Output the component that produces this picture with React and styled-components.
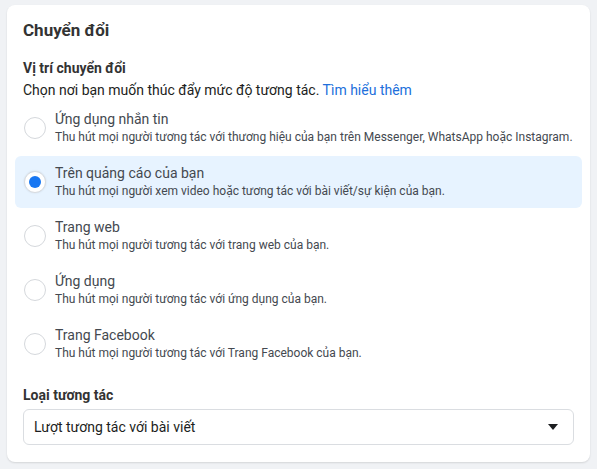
import React, { useState } from 'react'
import styled, { createGlobalStyle } from 'styled-components'

const GlobalStyle = createGlobalStyle`
  html, body {
    margin: 0;
    padding: 0;
    background: #f0f2f5;
    font-family: Roboto, "Liberation Sans", Arial, sans-serif;
  }
`

const Page = styled.div`
  padding: 5px 7px 7px 7px;
`

const Card = styled.div`
  background: #fff;
  border-radius: 8px;
  box-shadow: 0 1px 2px rgba(0, 0, 0, 0.12);
  padding: 14px 16px 17px 16px;
  color: #1c1e21;
`

const Title = styled.div`
  font-size: 17px;
  font-weight: 700;
  color: #333;
  line-height: 22px;
  margin-bottom: 17px;
`

const Label = styled.div`
  font-size: 14px;
  font-weight: 700;
  color: #333;
  line-height: 20px;
`

const Desc = styled.div`
  font-size: 14px;
  line-height: 20px;
  color: #1c1e21;
  margin: 2px 0 2px 0;
`

const Link = styled.a`
  color: #216fdb;
  text-decoration: none;
  cursor: pointer;
`

const List = styled.div`
  display: flex;
  flex-direction: column;
  gap: 2px;
  margin: 0 -8px 0 -8px;
`

const Row = styled.label`
  display: flex;
  align-items: center;
  gap: 9px;
  padding: 8px 8px 8px 9px;
  border-radius: 6px;
  background: ${({ $active }) => ($active ? '#e7f3ff' : 'transparent')};
  cursor: pointer;
`

const Radio = styled.span`
  flex: none;
  width: 20px;
  height: 20px;
  border-radius: 50%;
  border: 1px solid ${({ $checked }) => ($checked ? '#d7dbe0' : '#d5d8dc')};
  background: #fff;
  display: flex;
  align-items: center;
  justify-content: center;
  box-shadow: ${({ $checked }) => ($checked ? '0 0 2px rgba(0,0,0,0.1)' : 'none')};
  &::after {
    content: '';
    width: 12px;
    height: 12px;
    border-radius: 50%;
    background: #1877f2;
    display: ${({ $checked }) => ($checked ? 'block' : 'none')};
  }
`

const Text = styled.div`
  display: flex;
  flex-direction: column;
`

const OptTitle = styled.div`
  font-size: 14px;
  line-height: 19px;
  color: #444950;
`

const OptDesc = styled.div`
  font-size: 12px;
  line-height: 17px;
  color: #444950;
`

const Section = styled.div`
  margin-top: 15px;
`

const Select = styled.div`
  margin-top: 4px;
  height: 34px;
  border: 1px solid #dadde1;
  border-radius: 6px;
  display: flex;
  align-items: center;
  justify-content: space-between;
  padding: 0 15px 0 10px;
  font-size: 14px;
  color: #1c1e21;
`

const Caret = styled.span`
  width: 0;
  height: 0;
  border-left: 5px solid transparent;
  border-right: 5px solid transparent;
  border-top: 6px solid #1c1e21;
`

const options = [
  { title: 'Ứng dụng nhắn tin', desc: 'Thu hút mọi người tương tác với thương hiệu của bạn trên Messenger, WhatsApp hoặc Instagram.' },
  { title: 'Trên quảng cáo của bạn', desc: 'Thu hút mọi người xem video hoặc tương tác với bài viết/sự kiện của bạn.' },
  { title: 'Trang web', desc: 'Thu hút mọi người tương tác với trang web của bạn.' },
  { title: 'Ứng dụng', desc: 'Thu hút mọi người tương tác với ứng dụng của bạn.' },
  { title: 'Trang Facebook', desc: 'Thu hút mọi người tương tác với Trang Facebook của bạn.' },
]

export default function App() {
  const [selected, setSelected] = useState(1)

  return (
    <Page>
      <GlobalStyle />
      <Card>
        <Title>Chuyển đổi</Title>
        <Label>Vị trí chuyển đổi</Label>
        <Desc>
          Chọn nơi bạn muốn thúc đẩy mức độ tương tác. <Link>Tìm hiểu thêm</Link>
        </Desc>
        <List>
          {options.map((o, i) => (
            <Row key={o.title} $active={selected === i} onClick={() => setSelected(i)}>
              <Radio $checked={selected === i} />
              <Text>
                <OptTitle>{o.title}</OptTitle>
                <OptDesc>{o.desc}</OptDesc>
              </Text>
            </Row>
          ))}
        </List>
        <Section>
          <Label>Loại tương tác</Label>
          <Select>
            <span>Lượt tương tác với bài viết</span>
            <Caret />
          </Select>
        </Section>
      </Card>
    </Page>
  )
}
